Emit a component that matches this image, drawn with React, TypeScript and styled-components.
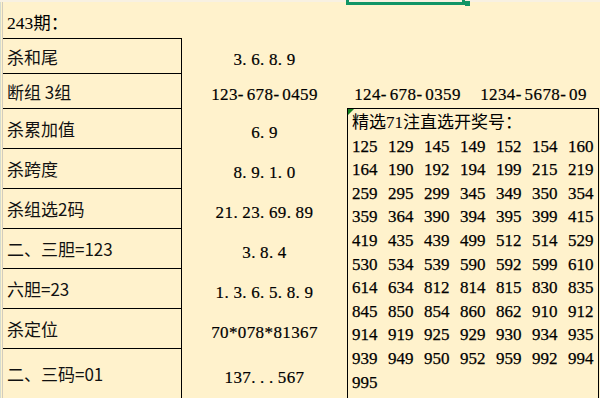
import styled, { createGlobalStyle } from 'styled-components';

const GlobalStyle = createGlobalStyle`
    html, body {
        margin: 0;
        padding: 0;
        overflow: hidden;
        background: #fff2cc;
    }
`;

const CJK = `'Noto Sans CJK SC', sans-serif`;
const SERIF = `'Liberation Serif', 'Noto Sans CJK SC', serif`;

const Sheet = styled.div`
    display: grid;
    grid-template-columns: 3px 179px 165px 121px 131px 1px;
    grid-template-rows: 2px 36px 35px 35px repeat(6, 40px) 50px 30px;
    width: 600px;
    height: 418px;
    background: #fff2cc;
    color: #000;
`;

const TopStrip = styled.div`
    grid-column: 1 / -1;
    grid-row: 1;
    position: relative;
    background: #f8f1e2;
`;

const Selection = styled.div`
    position: absolute;
    left: 346px;
    top: -20px;
    width: 119px;
    height: 25px;
    box-sizing: border-box;
    border: 3px solid #119565;
    z-index: 2;
`;

const Handle = styled.div`
    position: absolute;
    left: 465px;
    top: 1px;
    width: 5px;
    height: 5px;
    background: #119565;
    z-index: 2;
`;

const LeftStrip = styled.div`
    grid-column: 1;
    grid-row: 2 / -1;
    box-sizing: border-box;
    border-left: 1px solid #d5dccf;
    border-right: 1px solid #d2ccbd;
`;

const Title = styled.div`
    grid-column: 2 / 4;
    grid-row: 2;
    display: flex;
    align-items: center;
    padding: 3px 0 0 4px;
    font-family: ${SERIF};
    font-size: 17.5px;
`;

const Label = styled.div<{ $row: number }>`
    grid-column: 2;
    grid-row: ${p => p.$row};
    display: flex;
    align-items: center;
    padding: 0 0 0 4px;
    border-top: 1px solid #000;
    border-right: 1px solid #000;
    font-family: ${CJK};
    font-size: 17px;
    line-height: 1;
    white-space: nowrap;
    color: #111;
`;

const Value = styled.div<{ $row: number; $col: number }>`
    grid-column: ${p => p.$col};
    grid-row: ${p => p.$row};
    display: flex;
    align-items: center;
    justify-content: center;
    padding-top: 8px;
    font-family: ${SERIF};
    font-size: 17px;
    line-height: 1;
    white-space: nowrap;
    -webkit-text-stroke: 0.2px #000;
`;

// half-width cell per character, the way the sheet's font spaces digits and dots
const Glyph = styled.span`
    display: inline-block;
    width: 8.9px;
    text-align: left;
`;

const Filler = styled.div`
    grid-column: 2;
    grid-row: 12;
    border-right: 1px solid #000;
`;

const PickBox = styled.div`
    grid-column: 4 / 6;
    grid-row: 5 / 13;
    position: relative;
    border: 1px solid #000;
    padding: 2px 0 0 4px;
    font-family: ${SERIF};
    font-size: 17px;
    line-height: 23.6px;

    &::before {
        content: '';
        position: absolute;
        left: 0;
        top: 0;
        border-top: 6px solid #12811e;
        border-right: 6px solid transparent;
    }
`;

const PickTitle = styled.div`
    white-space: nowrap;
`;

const NumberGrid = styled.div`
    display: grid;
    grid-template-columns: repeat(7, 36px);
`;

const Num = styled.span`
    white-space: nowrap;
    -webkit-text-stroke: 0.25px #000;
`;

const rows: { label: string; value: string; extra?: string[] }[] = [
    { label: '杀和尾', value: '3.6.8.9' },
    { label: '断组 3组', value: '123-678-0459', extra: ['124-678-0359', '1234-5678-09'] },
    { label: '杀累加值', value: '6.9' },
    { label: '杀跨度', value: '8.9.1.0' },
    { label: '杀组选2码', value: '21.23.69.89' },
    { label: '二、三胆=123', value: '3.8.4' },
    { label: '六胆=23', value: '1.3.6.5.8.9' },
    { label: '杀定位', value: '70*078*81367' },
    { label: '二、三码=01', value: '137...567' },
];

const picks = (
    '125 129 145 149 152 154 160 164 190 192 194 199 215 219 ' +
    '259 295 299 345 349 350 354 359 364 390 394 395 399 415 ' +
    '419 435 439 499 512 514 529 530 534 539 590 592 599 610 ' +
    '614 634 812 814 815 830 835 845 850 854 860 862 910 912 ' +
    '914 919 925 929 930 934 935 939 949 950 952 959 992 994 995'
).split(' ');

function CellText({ text }: { text: string }) {
    return (
        <span>
            {text.split('').map((c, i) => (
                <Glyph key={i}>{c}</Glyph>
            ))}
        </span>
    );
}

export default function App() {
    return (
        <>
            <GlobalStyle />
            <Sheet>
                <TopStrip>
                    <Selection />
                    <Handle />
                </TopStrip>
                <LeftStrip />
                <Title>243期：</Title>
                {rows.map((r, i) => {
                    const row = i + 3;
                    return [
                        <Label key={`l${i}`} $row={row}>
                            {r.label}
                        </Label>,
                        <Value key={`v${i}`} $row={row} $col={3}>
                            <CellText text={r.value} />
                        </Value>,
                        ...(r.extra || []).map((x, j) => (
                            <Value key={`x${i}${j}`} $row={row} $col={4 + j}>
                                <CellText text={x} />
                            </Value>
                        )),
                    ];
                })}
                <Filler />
                <PickBox>
                    <PickTitle>精选71注直选开奖号：</PickTitle>
                    <NumberGrid>
                        {picks.map((n, i) => (
                            <Num key={i}>{n}</Num>
                        ))}
                    </NumberGrid>
                </PickBox>
            </Sheet>
        </>
    );
}
